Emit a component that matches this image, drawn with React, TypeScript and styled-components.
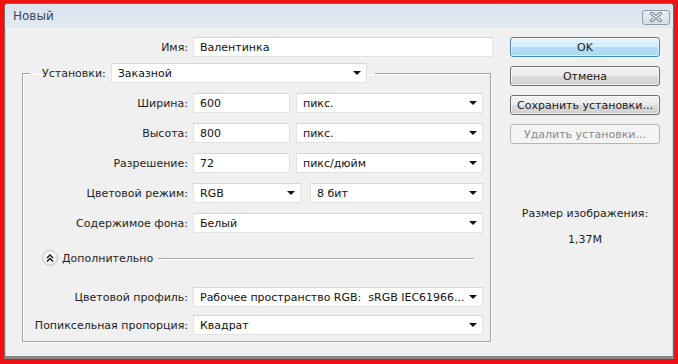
import styled, { createGlobalStyle } from 'styled-components'

const GlobalStyle = createGlobalStyle`
  html, body {
    margin: 0;
    padding: 0;
    background: #ee1313;
  }
  body {
    font-family: 'DejaVu Sans', 'Liberation Sans', sans-serif;
    font-size: 11px;
    color: #1e1e1e;
  }
`

const Page = styled.div`
  width: 678px;
  height: 364px;
  box-sizing: border-box;
  padding: 3px 4px 5px 4px;
`

const Window = styled.div`
  height: 100%;
  box-sizing: border-box;
  display: flex;
  flex-direction: column;
  background: #f0f0f0;
  border: 1px solid #6e6e6e;
  border-bottom: 3px solid #858585;
  border-radius: 4px 4px 0 0;
  box-shadow: inset 1px 0 0 #c9d2dc, inset -1px 0 0 #c9d2dc;
  overflow: hidden;
`

const TitleBar = styled.div`
  height: 24px;
  flex: none;
  display: flex;
  align-items: center;
  justify-content: space-between;
  padding: 0 3px 0 8px;
  background: linear-gradient(#d9e3ee, #e3eaf2);
`

const Title = styled.span`
  font-size: 12px;
  color: #3d4855;
`

const CloseButton = styled.div`
  width: 28px;
  height: 15px;
  box-sizing: border-box;
  margin-top: 2px;
  border: 1px solid #8c9aaa;
  border-radius: 3px;
  background: linear-gradient(#e8edf2, #d4dde6);
  display: flex;
  align-items: center;
  justify-content: center;
`

const Body = styled.div`
  flex: 1;
  display: flex;
  gap: 17px;
  padding: 9px 0 0 17px;
`

const FormColumn = styled.div`
  width: 471px;
  display: flex;
  flex-direction: column;
`

const Row = styled.div`
  display: flex;
  align-items: center;
  gap: 5px;
  height: 20px;
`

const Label = styled.span<{ $w: number }>`
  width: ${(p) => p.$w}px;
  flex: none;
  text-align: right;
  white-space: nowrap;
`

const Field = styled.div<{ $w: number; $ml?: number }>`
  width: ${(p) => p.$w}px;
  height: 20px;
  box-sizing: border-box;
  flex: none;
  margin-left: ${(p) => p.$ml ?? 0}px;
  background: #fff;
  border: 1px solid #e2e2e2;
  border-top-color: #d6d6d6;
  display: flex;
  align-items: center;
  padding: 0 5px 0 6px;
  color: #111;
  white-space: pre;
`

const Arrow = styled.span`
  margin-left: auto;
  width: 0;
  height: 0;
  border-left: 4px solid transparent;
  border-right: 4px solid transparent;
  border-top: 4px solid #111;
`

const FieldSet = styled.fieldset`
  margin: 6px 2px 0 0;
  padding: 10px 7px 6px 0;
  border: 1px solid #a3a3a3;
  box-shadow: 1px 1px 0 #fff, inset 1px 1px 0 #fff;
  min-width: 0;
`

const Legend = styled.legend`
  margin-left: 7px;
  padding: 0 8px 0 12px;
`

const Rows = styled.div<{ $gap: number }>`
  display: flex;
  flex-direction: column;
  gap: ${(p) => p.$gap}px;
`

const AdvancedRow = styled.div`
  display: flex;
  align-items: center;
  height: 16px;
  margin: 17px 9px 21px 19px;
`

const ToggleIcon = styled.div`
  width: 16px;
  height: 16px;
  box-sizing: border-box;
  border-radius: 50%;
  border: 1px solid #c4c4c4;
  background: radial-gradient(circle at 50% 35%, #ffffff, #e4e4e4);
  display: flex;
  align-items: center;
  justify-content: center;
  margin-right: 4px;
`

const Divider = styled.div`
  flex: 1;
  height: 1px;
  margin-left: 5px;
  background: #a8a8a8;
  box-shadow: 0 1px 0 #fff;
`

const ButtonColumn = styled.div`
  width: 150px;
  display: flex;
  flex-direction: column;
  gap: 9px;
`

const Button = styled.div<{ $variant?: 'default' | 'disabled' }>`
  height: 20px;
  box-sizing: border-box;
  border-radius: 3px;
  display: flex;
  align-items: center;
  justify-content: center;
  white-space: nowrap;
  border: 1px solid
    ${(p) => (p.$variant === 'default' ? '#3c8ac4' : p.$variant === 'disabled' ? '#b3b8bc' : '#707070')};
  background: ${(p) =>
    p.$variant === 'default'
      ? 'linear-gradient(#e4f5fd 0%, #d2edfa 48%, #b3def5 52%, #a8d8f2 100%)'
      : p.$variant === 'disabled'
        ? '#f4f4f4'
        : 'linear-gradient(#f2f2f2 0%, #ebebeb 48%, #dddddd 52%, #cfcfcf 100%)'};
  box-shadow: ${(p) => (p.$variant === 'disabled' ? 'none' : 'inset 0 0 0 1px rgba(255,255,255,0.6)')};
  color: ${(p) => (p.$variant === 'disabled' ? '#8a8a8a' : '#1a1a1a')};
`

const SizeInfo = styled.div`
  margin-top: 54px;
  display: flex;
  flex-direction: column;
  align-items: center;
  gap: 12px;
  line-height: 14px;
`

const Select = ({ w, value, ml }: { w: number; value: string; ml?: number }) => (
  <Field $w={w} $ml={ml}>
    {value}
    <Arrow />
  </Field>
)

const App = () => {
  return (
    <Page>
      <GlobalStyle />
      <Window>
        <TitleBar>
          <Title>Новый</Title>
          <CloseButton>
            <svg width="12" height="10" viewBox="0 0 12 10">
              <path d="M2 1.5 L10 8.5 M10 1.5 L2 8.5" stroke="#6d7885" strokeWidth="3.6" strokeLinecap="round" />
              <path d="M2 1.5 L10 8.5 M10 1.5 L2 8.5" stroke="#f7f9fb" strokeWidth="1.6" strokeLinecap="round" />
            </svg>
          </CloseButton>
        </TitleBar>
        <Body>
          <FormColumn>
            <Row>
              <Label $w={166}>Имя:</Label>
              <Field $w={300}>Валентинка</Field>
            </Row>
            <FieldSet>
              <Legend>
                <Row>
                  <span>Установки:</span>
                  <Select w={256} value="Заказной" />
                </Row>
              </Legend>
              <Rows $gap={10}>
                <Row>
                  <Label $w={165}>Ширина:</Label>
                  <Field $w={97}>600</Field>
                  <Select w={187} ml={1} value="пикс." />
                </Row>
                <Row>
                  <Label $w={165}>Высота:</Label>
                  <Field $w={97}>800</Field>
                  <Select w={187} ml={1} value="пикс." />
                </Row>
                <Row>
                  <Label $w={165}>Разрешение:</Label>
                  <Field $w={97}>72</Field>
                  <Select w={187} ml={1} value="пикс/дюйм" />
                </Row>
                <Row>
                  <Label $w={165}>Цветовой режим:</Label>
                  <Select w={108} value="RGB" />
                  <Select w={173} ml={4} value="8 бит" />
                </Row>
                <Row>
                  <Label $w={165}>Содержимое фона:</Label>
                  <Select w={290} value="Белый" />
                </Row>
              </Rows>
              <AdvancedRow>
                <ToggleIcon>
                  <svg width="8" height="8" viewBox="0 0 8 8">
                    <path d="M1 4 L4 1 L7 4 M1 7.5 L4 4.5 L7 7.5" fill="none" stroke="#111" strokeWidth="1.3" />
                  </svg>
                </ToggleIcon>
                <span>Дополнительно</span>
                <Divider />
              </AdvancedRow>
              <Rows $gap={8}>
                <Row>
                  <Label $w={165}>Цветовой профиль:</Label>
                  <Select w={290} value="Рабочее пространство RGB:  sRGB IEC61966..." />
                </Row>
                <Row>
                  <Label $w={165}>Попиксельная пропорция:</Label>
                  <Select w={290} value="Квадрат" />
                </Row>
              </Rows>
            </FieldSet>
          </FormColumn>
          <ButtonColumn>
            <Button $variant="default">OK</Button>
            <Button>Отмена</Button>
            <Button>Сохранить установки...</Button>
            <Button $variant="disabled">Удалить установки...</Button>
            <SizeInfo>
              <span>Размер изображения:</span>
              <span>1,37M</span>
            </SizeInfo>
          </ButtonColumn>
        </Body>
      </Window>
    </Page>
  )
}

export default App
